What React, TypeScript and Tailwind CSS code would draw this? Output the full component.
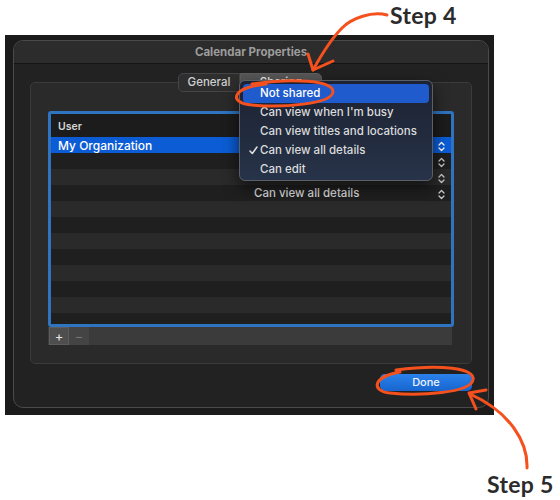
import React from 'react';

const sf = { fontFamily: 'Inter, "Open Sans", "Liberation Sans", sans-serif' };

function Updown({ light }: { light?: boolean }) {
  return (
    <svg width="7" height="11" viewBox="0 0 7 11" fill="none" stroke={light ? '#ffffff' : '#c8c8c8'} strokeWidth="1.3" strokeLinecap="round" strokeLinejoin="round">
      <path d="M1 4 L3.5 1.5 L6 4" />
      <path d="M1 7 L3.5 9.5 L6 7" />
    </svg>
  );
}

const rows = Array.from({ length: 12 }, (_, i) => i);

function TableRow({ i }: { i: number }) {
  const selected = i === 0;
  const hasPopup = i < 4;
  // rows 0-2 sit under the open menu, only their arrows show
  const showLabel = i === 3;
  const bg = selected ? 'bg-[#0b5cd5]' : i % 2 === 1 ? 'bg-[#1f1f1f]' : 'bg-[#2a2a2a]';
  return (
    <div className={`h-[16px] flex items-center pt-[2px] ${bg}`}>
      <div className={`w-[199px] pl-[7px] text-[12px] font-medium ${selected ? 'text-white' : 'text-[#ddd]'}`}>
        {selected ? 'My Organization' : ''}
      </div>
      {hasPopup && (
        <div className="flex-1 flex items-center justify-between pl-[4px] pr-[6px]">
          <span className="text-[11.5px] font-medium text-[#d8d8d8]">{showLabel ? 'Can view all details' : ''}</span>
          <Updown light={selected} />
        </div>
      )}
    </div>
  );
}

function Menu() {
  const items = ['Not shared', "Can view when I'm busy", 'Can view titles and locations', 'Can view all details', 'Can edit'];
  return (
    <div className="absolute z-20 left-[239px] top-[80px] w-[194px] h-[101px] rounded-[6px] border border-[#5a5f68] bg-gradient-to-b from-[#1c2231] to-[#273349] shadow-[0_6px_16px_rgba(0,0,0,0.6)] px-[3px] pt-[3px]" style={sf}>
      {items.map((t, i) => (
        <div key={t} className={`h-[19px] flex items-center rounded-[4px] text-[11.5px] font-medium ${i === 0 ? 'bg-[#1f5bcc] text-white' : 'text-[#dcdcdc]'}`}>
          <span className="w-[17px] flex justify-center pl-[3px]">
            {i === 3 && (
              <svg width="9" height="9" viewBox="0 0 9 9" fill="none" stroke="#e0e0e0" strokeWidth="1.5" strokeLinecap="round" strokeLinejoin="round">
                <path d="M1 5 L3.3 7.5 L8 1" />
              </svg>
            )}
          </span>
          {t}
        </div>
      ))}
    </div>
  );
}

function Annotations() {
  const c = '#f4511e';
  return (
    <svg className="absolute z-30 left-0 top-0 pointer-events-none" width="560" height="500" viewBox="0 0 560 500" fill="none" stroke={c} strokeWidth="3" strokeLinecap="round" strokeLinejoin="round">
      <path d="M387 15 C 372 11, 352 18, 342 28 C 332 38, 323 52, 313 70" />
      <path d="M308 54 L313 70 L333 61" />
      <path d="M252 84 C 292 78, 334 80, 333 92 C 332 104, 282 108, 252 105 C 229 103, 230 88, 266 84" />
      <path d="M396 370 C 440 364, 476 368, 473 380 C 470 393, 420 396, 390 393 C 371 391, 372 377, 400 372" />
      <path d="M527 468 C 528 442, 510 412, 470 394" />
      <path d="M486 390 L469 393 L476 409" />
    </svg>
  );
}

export default function App() {
  return (
    <div className="relative w-[560px] h-[500px] bg-white overflow-hidden pt-[35px] pl-[5px]" style={sf}>
      <div className="w-[489px] h-[380px] bg-[#1b1b1b] pl-[8px] pt-[5px]">
        <div className="w-[476px] h-[368px] rounded-[10px] border border-[#4a4a4a] bg-[#222222] flex flex-col overflow-hidden">
          <div className="h-[23px] bg-[#2c2c2c] border-b border-[#141414] flex items-center justify-center pt-[2px] text-[11.5px] font-bold text-[#9c9c9c]">
            Calendar Properties
          </div>
          <div className="flex-1 px-[16px] pt-[9px] flex flex-col">
            <div className="relative z-10 h-[19px] flex justify-center pr-[2px]">
              <div className="w-[62px] flex items-center justify-center rounded-l-[5px] border border-[#454545] bg-[#2e2e2e] text-[11.5px] font-medium text-[#cfcfcf]">General</div>
              <div className="w-[82px] flex items-center justify-center rounded-r-[5px] border border-[#5e5e5e] bg-[#575757] text-[11.5px] font-medium text-[#eee]">Sharing</div>
            </div>
            <div className="-mt-[10px] h-[282px] rounded-[5px] border border-[#3b3b3b] bg-[#2a2a2a] px-[17px] pt-[28px] flex flex-col">
              <div className="h-[216px] border-[3px] border-[#2e74c0] rounded-[3px] overflow-hidden bg-[#1f1f1f]">
                <div className="h-[23px] bg-[#1c1c1c] flex items-center pl-[7px] pt-[2px] text-[10.5px] font-semibold text-[#d6d6d6]">User</div>
                {rows.map((i) => (
                  <TableRow key={i} i={i} />
                ))}
              </div>
              <div className="h-[18px] mr-[2px] bg-[#3b3b3b] flex">
                <div className="w-[20px] ml-[1px] flex items-center justify-center bg-[#4e4e4e] border border-[#5c5c5c] text-[13px] text-[#e6e6e6] leading-none">+</div>
                <div className="w-[20px] flex items-center justify-center bg-[#444] text-[13px] text-[#777] leading-none">−</div>
              </div>
            </div>
            <div className="mt-[10px] flex justify-end">
              <div className="w-[92px] h-[17px] rounded-[5px] bg-gradient-to-b from-[#2b81ea] to-[#1765d0] flex items-center justify-center text-[11px] font-medium text-[#eef3fb]">
                Done
              </div>
            </div>
          </div>
        </div>
      </div>
      <Menu />
      <Annotations />
      <div className="absolute z-30 left-[390px] -top-[2px] text-[23px] font-bold text-[#2b2b2b] tracking-[0.3px]" style={{ fontFamily: 'Lato, "Open Sans", sans-serif' }}>Step 4</div>
      <div className="absolute z-30 left-[487px] top-[467px] text-[23px] font-bold text-[#2b2b2b] tracking-[0.3px]" style={{ fontFamily: 'Lato, "Open Sans", sans-serif' }}>Step 5</div>
    </div>
  );
}
